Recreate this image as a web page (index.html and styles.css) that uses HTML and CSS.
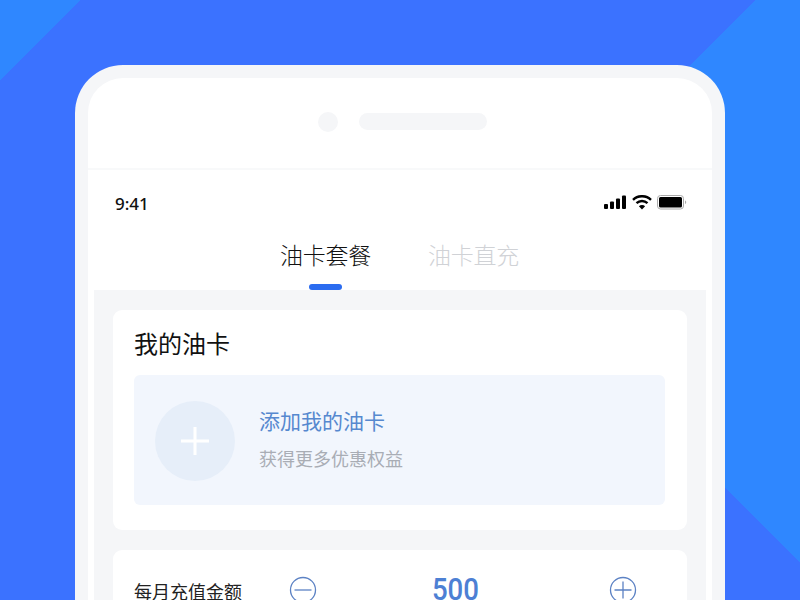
FILE: index.html
```html
<!DOCTYPE html>
<html lang="zh-CN">
<head>
<meta charset="utf-8">
<title>油卡套餐</title>
<link rel="stylesheet" href="styles.css">
</head>
<body>
<div class="stage">
  <div class="phone">
    <div class="speaker-bar">
      <span class="camera"></span>
      <span class="speaker"></span>
    </div>
    <div class="status">
      <span class="time">9:41</span>
      <span class="status-icons">
        <svg class="ico-signal" width="22" height="14" viewBox="0 0 22 14"><rect x="0" y="9" width="4" height="5" rx="1"/><rect x="6" y="6.500" width="4" height="7.500" rx="1"/><rect x="12" y="3.500" width="4" height="10.500" rx="1"/><rect x="18" y="0.500" width="4" height="13.500" rx="1"/></svg>
        <svg class="ico-wifi" width="20" height="15" viewBox="0 0 20 15"><path d="M1 4.800a13 13 0 0 1 18 0" fill="none" stroke="#000" stroke-width="2.400"/><path d="M4.500 8.200a8 8 0 0 1 11 0" fill="none" stroke="#000" stroke-width="2.400"/><path d="M10 14.500 6.900 11.300a4.400 4.400 0 0 1 6.200 0z"/></svg>
        <svg class="ico-battery" width="30" height="15" viewBox="0 0 30 15"><rect x="0.500" y="0.500" width="26" height="13.500" rx="3" fill="none" stroke="#aaa"/><rect x="2" y="2" width="23" height="10.500" rx="1.500"/><path d="M28 5.500v3.500c.8-.3 1.200-1 1.200-1.750s-.4-1.450-1.200-1.750z" fill="#aaa"/></svg>
      </span>
    </div>
    <div class="tabs">
      <div class="tab tab-active">油卡套餐<span class="tab-bar"></span></div>
      <div class="tab tab-muted">油卡直充</div>
    </div>
    <div class="content">
      <section class="card card-oil">
        <h2 class="card-title">我的油卡</h2>
        <div class="add-box">
          <div class="add-circle">
            <svg width="32" height="32" viewBox="0 0 32 32"><path d="M16 2v28M2 16h28" stroke="#fff" stroke-width="3" fill="none"/></svg>
          </div>
          <div class="add-text">
            <div class="add-title">添加我的油卡</div>
            <div class="add-sub">获得更多优惠权益</div>
          </div>
        </div>
      </section>
      <section class="card card-amount">
        <span class="amount-label">每月充值金额</span>
        <div class="stepper">
          <svg width="28" height="28" viewBox="0 0 28 28"><circle cx="14" cy="14" r="12.500" fill="none" stroke="#5c82c4" stroke-width="1.300"/><path d="M5.500 14h17" stroke="#5c82c4" stroke-width="1.300"/></svg>
          <span class="amount-value">500</span>
          <svg width="28" height="28" viewBox="0 0 28 28"><circle cx="14" cy="14" r="12.500" fill="none" stroke="#5c82c4" stroke-width="1.300"/><path d="M5.500 14h17M14 5.500v17" stroke="#5c82c4" stroke-width="1.300"/></svg>
        </div>
      </section>
    </div>
  </div>
</div>
</body>
</html>
```
FILE: styles.css
```css
* { box-sizing: border-box; }
html, body { margin: 0; padding: 0; }
body {
  font-family: "Noto Sans CJK SC", "Noto Sans", sans-serif;
  color: #1a1a1a;
}
.stage {
  width: 800px;
  height: 600px;
  overflow: hidden;
  padding-top: 65px;
  background:
    linear-gradient(135deg, #2f87ff 0 56.6px, transparent 56.6px),
    linear-gradient(135deg, #3b72ff 0 533.9px, transparent 533.9px),
    linear-gradient(225deg, transparent 0 397.4px, #3b72ff 397.4px),
    #2f87ff;
}
.phone {
  width: 650px;
  height: 700px;
  margin: 0 auto;
  border: 13px solid #f5f6f8;
  border-bottom: 0;
  border-radius: 48px 48px 0 0;
  background: #fff;
  overflow: hidden;
}
.speaker-bar {
  height: 92px;
  padding: 35px 0 0 230px;
  display: flex;
  align-items: flex-start;
  gap: 21px;
  border-bottom: 2px solid #f8f9fa;
}
.camera {
  width: 20px;
  height: 20px;
  margin-top: -1px;
  border-radius: 50%;
  background: #f5f6f8;
}
.speaker {
  width: 128px;
  height: 17px;
  border-radius: 9px;
  background: #f5f6f8;
}
.status {
  height: 38px;
  padding: 19px 25px 0 27px;
  display: flex;
  justify-content: space-between;
  align-items: flex-start;
}
.time {
  font-family: "Noto Sans", sans-serif;
  font-size: 17px;
  font-weight: 500;
  line-height: 30px;
  color: #111;
}
.status-icons {
  display: flex;
  align-items: flex-start;
  gap: 5px;
  margin-top: 6px;
}
.ico-wifi { margin-left: 1px; }
.tabs {
  height: 82px;
  padding: 21px 0 0 192px;
  display: flex;
  gap: 58px;
}
.tab {
  position: relative;
  flex: none;
  font-size: 23px;
  font-weight: 300;
  line-height: 50px;
  height: 50px;
  letter-spacing: -.25px;
  width: 90px;
  white-space: nowrap;
}
.tab-active { color: #111; }
.tab-muted { color: #d0d2d6; }
.tab-bar {
  position: absolute;
  left: 29px;
  top: 55px;
  width: 33px;
  height: 6px;
  border-radius: 3px;
  background: #2b6cf0;
}
.content {
  margin: 0 6px;
  padding: 20px 19px;
  background: #f5f6f8;
  min-height: 500px;
  display: flex;
  flex-direction: column;
  gap: 20px;
}
.card {
  background: #fff;
  border-radius: 9px;
  padding: 0 21px;
}
.card-oil { height: 220px; padding-top: 13px; }
.card-title {
  margin: 0;
  font-size: 24px;
  font-weight: 400;
  line-height: 40px;
  color: #111;
}
.add-box {
  margin-top: 12px;
  width: 531px;
  height: 130px;
  padding-left: 21px;
  padding-top: 1px;
  border-radius: 6px;
  background: #f2f6fd;
  display: flex;
  align-items: center;
  gap: 24px;
}
.add-circle {
  width: 80px;
  height: 80px;
  border-radius: 50%;
  background: #e6eef9;
  display: flex;
  align-items: center;
  justify-content: center;
}
.add-text { padding-bottom: 6px; }
.add-title {
  font-size: 21px;
  font-weight: 400;
  line-height: 30px;
  color: #5688cf;
}
.add-sub {
  margin-top: 10px;
  font-size: 18px;
  font-weight: 400;
  line-height: 26px;
  color: #a9adb5;
}
.card-amount {
  height: 120px;
  padding-top: 26px;
  display: flex;
  align-items: flex-start;
}
.amount-label {
  width: 155px;
  font-size: 18px;
  font-weight: 400;
  line-height: 30px;
  color: #222;
}
.stepper {
  width: 348px;
  display: flex;
  justify-content: space-between;
  align-items: flex-start;
}
.amount-value {
  display: inline-block;
  margin-right: 15px;
  font-family: Roboto, "Liberation Sans", sans-serif;
  font-size: 31px;
  font-weight: 500;
  line-height: 28px;
  transform: scaleX(.89);
  color: #4d80d4;
}
```
